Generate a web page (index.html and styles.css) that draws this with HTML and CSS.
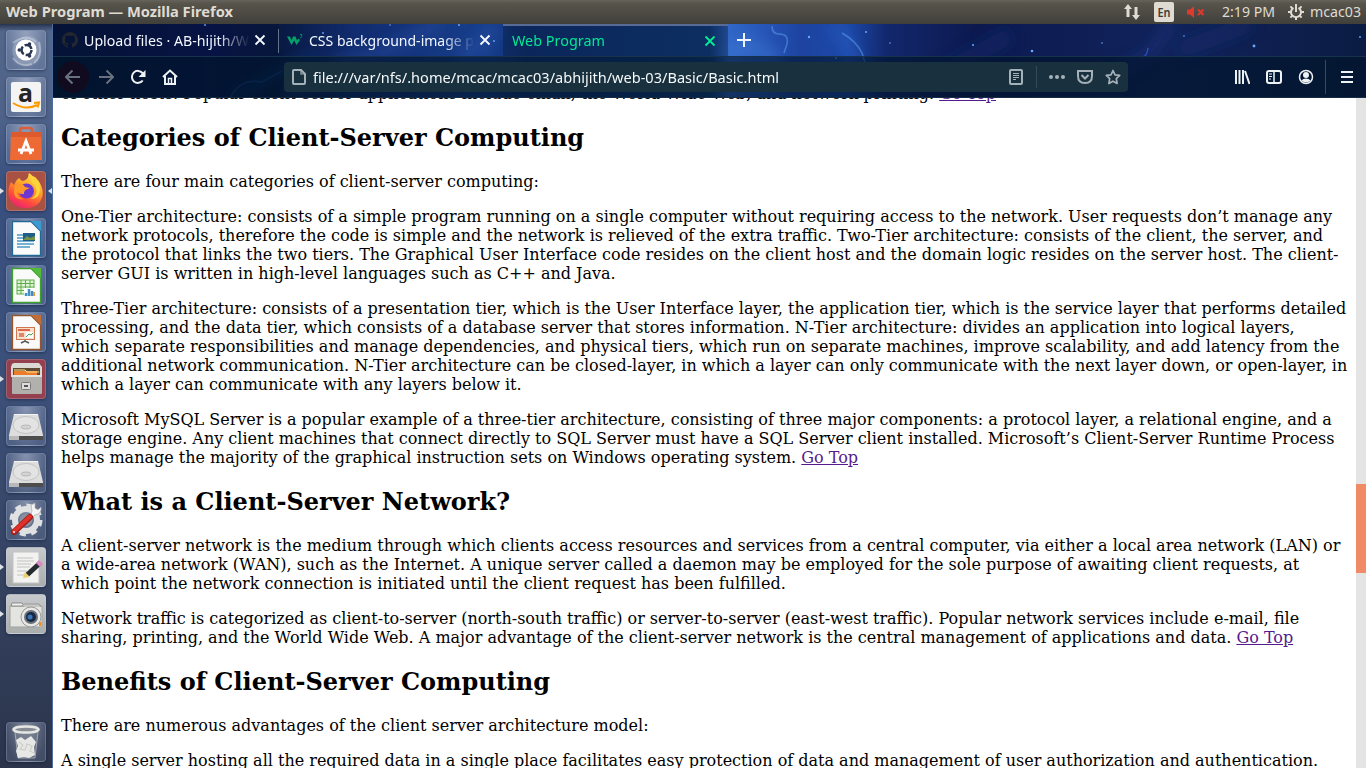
FILE: index.html
```html
<!DOCTYPE html>
<html lang="en">
<head>
<meta charset="utf-8">
<title>Web Program</title>
<link rel="stylesheet" href="styles.css">
</head>
<body>
<div class="desktop">
<header class="panel">
  <svg class="label title" width="240" height="24"><text x="0" y="17" textLength="227" lengthAdjust="spacingAndGlyphs">Web Program — Mozilla Firefox</text></svg>
  <div class="indicators">
    <svg width="18" height="18" viewBox="0 0 18 18"><path d="M5 1L9 6H6.500V14H3.500V6H1ZM13 17L9 12h2.500V4h3v8H17Z" fill="#dfdbd2"/></svg>
    <svg class="lang" width="20" height="20"><rect width="20" height="20" rx="2" fill="#dfdbd2"/><text x="3.500" y="15" textLength="13" lengthAdjust="spacingAndGlyphs">En</text></svg>
    <svg class="mute" width="18" height="14" viewBox="0 0 18 14"><path d="M0 4.500h3l4-3.500v12L3 9.500H0Z" fill="#df382c"/><path d="M11 4.500l5.500 5.500M16.500 4.500l-5.500 5.500" stroke="#df382c" stroke-width="2"/></svg>
    <svg class="label clock" width="56" height="24"><text x="0" y="17" textLength="53" lengthAdjust="spacingAndGlyphs">2:19 PM</text></svg>
    <svg class="gear" width="16" height="16" viewBox="-8 -8 16 16" fill="none" stroke="#dfdbd2"><path d="M-2.500-4.200A5 5 0 1 0 2.500-4.200" stroke-width="2"/><path d="M0-8V0" stroke-width="2"/><path d="M-8 0h3M5 0h3M0 5v3M-5.600-5.600l2 2M5.600-5.600l-2 2M-5.600 5.600l2-2M5.600 5.600l-2-2" stroke-width="2"/></svg>
    <svg class="label user" width="56" height="24"><text x="0" y="17" textLength="51" lengthAdjust="spacingAndGlyphs">mcac03</text></svg>
  </div>
</header>
<div class="workspace">
<nav class="launcher">
  <div class="tile"><svg viewBox="0 0 40 40"><path d="M7 25C4 13 15 3 28 7C36 12 36 25 31 31C28 37 15 37 10 32" fill="#b6bdd0" opacity=".38"/><path d="M7 13Q20 3 30 12M33 12Q37 26 28 33M7 28Q14 38 26 34" fill="none" stroke="#e1e5ee" stroke-width="2" opacity=".4"/><circle cx="20" cy="20" r="10.500" fill="#fff"/><circle cx="20.500" cy="20" r="5" fill="none" stroke="#2c3550" stroke-width="2.500" stroke-dasharray="8.500 2"/><circle cx="13.300" cy="20" r="1.800" fill="#2c3550"/><circle cx="23.500" cy="14" r="1.800" fill="#2c3550"/><circle cx="23.500" cy="26" r="1.800" fill="#2c3550"/></svg></div>
  <div class="tile"><svg viewBox="0 0 40 40"><rect x="5" y="5" width="30" height="30" rx="2" fill="#f4f4f4"/><text class="amazon" x="12" y="25" textLength="15" lengthAdjust="spacingAndGlyphs">a</text><path d="M7 26Q20 34 31 28M28 26l5-.500-1.500 5" fill="none" stroke="#ff9900" stroke-width="2"/></svg></div>
  <div class="tile"><svg viewBox="0 0 40 40"><path d="M14 13V6q0-2 2-2h8q2 0 2 2v7" fill="none" stroke="#d95f3a" stroke-width="2.500"/><path d="M5 8h30l1 28H4Z" fill="#ee6a35"/><path d="M5 8h30v5H5Z" fill="#dd5a2c"/><path d="M15 30l5-13 5 13M12 26h16" fill="none" stroke="#fff" stroke-width="2.800"/></svg></div>
  <div class="tile tile-firefox running focused"><svg viewBox="0 0 40 40"><defs><linearGradient id="fox" x1=".8" y1="0" x2=".3" y2="1"><stop stop-color="#fff04d"/><stop offset=".45" stop-color="#ff9a28"/><stop offset=".75" stop-color="#ff493f"/><stop offset="1" stop-color="#ee2273"/></linearGradient></defs><path d="M5 11l3 3Q10 9 13 7l3 3q6 0 7-8c5 3 5 7 8 9l1-2c11 16 1 28-12 28C3 37-1 22 5 11Z" fill="url(#fox)"/><circle cx="20.500" cy="20" r="7.500" fill="#6d38d2"/><path d="M9 14q8-3 10 2l5 1q-7 2-6 6-5 0-7-2 1 6 7 7-13 2-9-14Z" fill="#ff9829"/><path d="M22 3c4 5 2 8 7 12 4 7-1 12-5 13 14 1 11-18 5-22Z" fill="#ffd33c"/></svg></div>
  <div class="tile"><svg viewBox="0 0 40 40"><path d="M6.500 3.500H25L34.500 13v24.500h-28Z" fill="#fafafa" stroke="#226894" stroke-width="1.300"/><path d="M25 3h10v10Z" fill="#3b9bd1"/><path d="M11 17h7M11 20h7M11 23h17M11 26h17M11 29h13" stroke="#4899c6" stroke-width="1.700"/><rect x="17" y="15" width="12" height="8" fill="#205e86"/><path d="M17 22l4-4 3 2 5-2v4Z" fill="#759347"/></svg></div>
  <div class="tile"><svg viewBox="0 0 40 40"><path d="M6.500 3.500H25L34.500 13v24.500h-28Z" fill="#fafafa" stroke="#3da32b" stroke-width="1.300"/><path d="M25 3h10v10Z" fill="#52bc38"/><rect x="11" y="15" width="17" height="14" fill="#dff3d7" stroke="#5eae48"/><path d="M11 18.500h17M11 22h17M11 25.500h17M15 15v14M19.500 15v14M24 15v14" stroke="#5eae48"/><rect x="18" y="23" width="11" height="8" fill="#fff"/><path d="M20 31v-3M23 31v-7M26 31v-5" stroke="#408fc1" stroke-width="2.500"/><path d="M28 31v-4" stroke="#e9983b" stroke-width="2"/></svg></div>
  <div class="tile"><svg viewBox="0 0 40 40"><path d="M6.500 3.500H25L34.500 13v24.500h-28Z" fill="#fafafa" stroke="#95552c" stroke-width="1.300"/><path d="M25 3h10v10Z" fill="#c26c36"/><rect x="10.500" y="15.500" width="18" height="12" fill="#f9dfcc" stroke="#d07651"/><path d="M12 18h12" stroke="#d9694a" stroke-width="2"/><path d="M13 22h5M13 24h5" stroke="#d9694a" stroke-width="1.500"/><rect x="20" y="20" width="7" height="6" fill="#fff"/><path d="M20 25l3-3 2 1 2-2" stroke="#43aa4f" fill="none"/><path d="M15 31l4-2 4 2M19 28v2" fill="none" stroke="#555" stroke-width="1.500"/></svg></div>
  <div class="tile tile-files running"><svg viewBox="0 0 40 40"><path d="M6 5l2-1h25l3 4v10H5V8Z" fill="#dbd9d3"/><path d="M7 9h27v8H7Z" fill="#5f4b35"/><path d="M8 12h23v5H8Z" fill="#ed7b2c"/><path d="M8 11h11l2 2h12" stroke="#ffe48b" fill="none"/><rect x="6" y="17" width="30" height="18" rx="1" fill="#b1b0ad"/><path d="M6 17h30" stroke="#e2e2df" stroke-width="2"/><rect x="15.500" y="23.500" width="9" height="7" rx="1" fill="#ddd" stroke="#777"/><path d="M18 27h4" stroke="#555" stroke-width="2"/></svg></div>
  <div class="tile"><svg viewBox="0 0 40 40"><use href="#disk"/></svg></div>
  <div class="tile"><svg viewBox="0 0 40 40"><g id="disk"><path d="M8 8h24l5 21v5H3v-5Z" fill="#dcdddc"/><path d="M3 30h34v4H3Z" fill="#4d4d4d"/><path d="M3 30h10v4H3Z" fill="#b8b8b8"/><ellipse cx="20" cy="19" rx="13" ry="8.500" fill="#e2e3e2" stroke="#c3c4c3"/><ellipse cx="20" cy="21" rx="5" ry="2" fill="#d2d3d2" stroke="#b8b8b8"/><path d="M8 8.500h24" stroke="#f4f4f4"/></g></svg></div>
  <div class="tile"><svg viewBox="0 0 40 40"><circle cx="20" cy="20" r="11" fill="none" stroke="#e0e1e2" stroke-width="6"/><circle cx="20" cy="20" r="14.500" fill="none" stroke="#e0e1e2" stroke-width="4" stroke-dasharray="6 5.390"/><circle cx="20" cy="20" r="6.500" fill="#87909f"/><path d="M25 14l1-3-1-6 4-2v5l3 2 3-3q1 7-6 8l-3 3Z" fill="#f4f4f4" stroke="#aaa" stroke-width=".7"/><path d="M8 32L24 17" stroke="#a21c17" stroke-width="6" stroke-linecap="round"/><path d="M8 31.500L24 16.500" stroke="#df3029" stroke-width="4" stroke-linecap="round"/><circle cx="8" cy="32" r="1" fill="#eee"/></svg></div>
  <div class="tile tile-light running"><svg viewBox="0 0 40 40"><rect x="7" y="5" width="26" height="31" fill="#f2f2f1" stroke="#c3c3c3"/><path d="M11 11h16M11 14h17M11 17h14M11 20h13M11 24h10M11 28h7" stroke="#c2c2c2"/><path d="M21 28L34 16" stroke="#252a30" stroke-width="5"/><path d="M32 18l3-3" stroke="#d98bc1" stroke-width="6"/><path d="M17 31l2-6 5 5Z" fill="#e9cf72"/></svg></div>
  <div class="tile tile-light running"><svg viewBox="0 0 40 40"><path d="M4 12h32v21H4Z" fill="#e4e4e1" stroke="#a2a39f"/><path d="M5 12l1-3h10l2 3Z" fill="#f2f2f0" stroke="#888"/><path d="M16 12l2-2h15l2 3" fill="#c9c9c6" stroke="#999"/><circle cx="25" cy="23" r="10" fill="#e8e8e6" stroke="#969a9a"/><circle cx="25" cy="23" r="7" fill="#6a7177"/><circle cx="25" cy="23" r="5" fill="#172846"/><circle cx="24" cy="23" r="2.500" fill="#3c75b3"/><rect x="33" y="28" width="2.500" height="4" fill="#ef8f2c"/></svg></div>
  <div class="tile trash"><svg viewBox="0 0 40 40"><path d="M8 9h24l-3 27H12Z" fill="#8b919a" opacity=".35"/><path d="M9 10l3 26h17l3-26" fill="none" stroke="#bcc0c6" stroke-width=".7"/><path d="M10 18l5-3 4 3 6-4 5 6-2 5 1 8-6 3-5-1-6 1-2-7 2-5Z" fill="#e7e8e6"/><path d="M13 20l4 3-3 4 5 1 2-6 5 2-2 5 4 2" fill="none" stroke="#cbcdc9" stroke-width="1.200"/><ellipse cx="20" cy="7.500" rx="12.500" ry="3" fill="#858c93" stroke="#e6e7e4" stroke-width="2.500"/></svg></div>
</nav>
<main class="browser">
  <div class="chrome">
    <svg class="nebula" width="1313" height="74" viewBox="53 24 1313 74" preserveAspectRatio="none">
      <defs><linearGradient id="sky"><stop stop-color="#05153a"/><stop offset=".12" stop-color="#08154a"/><stop offset=".17" stop-color="#081940"/><stop offset=".23" stop-color="#112c70"/><stop offset=".33" stop-color="#183f8d"/><stop offset=".36" stop-color="#103173"/><stop offset=".5" stop-color="#123d7e"/><stop offset=".515" stop-color="#3167c7"/><stop offset=".55" stop-color="#2450b2"/><stop offset=".57" stop-color="#1d439f"/><stop offset=".605" stop-color="#1d4aab"/><stop offset=".635" stop-color="#12276c"/><stop offset=".7" stop-color="#0c1a50"/><stop offset=".85" stop-color="#11235b"/><stop offset="1" stop-color="#0b1c43"/></linearGradient><filter id="soft" x="-20%" y="-60%" width="140%" height="220%"><feGaussianBlur stdDeviation="7"/></filter></defs>
      <rect x="53" y="24" width="1313" height="74" fill="url(#sky)"/>
      <g filter="url(#soft)" fill="none">
        <path d="M285 96L345 62 384 52 442 22M460 60l42-35" stroke="#3156b0" stroke-width="12" opacity=".38"/>
        <path d="M235 98l40-25 40-15" stroke="#164791" stroke-width="6" opacity=".6"/>
        <path d="M728 55l20-10 30 15" stroke="#488ae1" stroke-width="14" opacity=".35"/>
        <path d="M830 28q25 14 26 40" stroke="#2b61cc" stroke-width="10" opacity=".45"/>
        <path d="M1120 70l28-15 24-31" stroke="#243c94" stroke-width="9" opacity=".4"/>
        <path d="M1180 50L1250 24M930 80L1010 35" stroke="#1b3277" stroke-width="16" opacity=".4"/>
      </g>
      <path d="M772 26q0 8 7 8 10 0 8 10l-3 9M842 33q14 8 20 20l5 16" fill="none" stroke="#60a9f4" stroke-width="1.500" opacity=".5"/>
      <path d="M230 98q10-20 32-16l20-11" fill="none" stroke="#1e4c94" stroke-width="1.500" opacity=".6"/>
      <path d="M1142 57q5 0 6-9" fill="none" stroke="#2b58d8" stroke-width="1.500" opacity=".8"/>
      <g fill="#68a7ff"><circle cx="205" cy="25" r="1"/><circle cx="459" cy="25" r="1"/><circle cx="323" cy="33" r=".9"/><circle cx="390" cy="25" r=".8"/><circle cx="809" cy="37" r="1.200"/><circle cx="866" cy="32" r="1"/><circle cx="890" cy="43" r=".8"/><circle cx="973" cy="45" r="1"/><circle cx="1032" cy="51" r="1.300"/><circle cx="1102" cy="43" r=".8"/><circle cx="1184" cy="36" r=".8"/><circle cx="1254" cy="46" r="1.400"/><circle cx="1360" cy="37" r=".9"/><circle cx="836" cy="58" r="1"/><circle cx="494" cy="41" r=".9"/></g>
    </svg>
    <div class="tabs">
      <div class="tab">
        <svg class="favicon" width="16" height="16" viewBox="0 0 16 16"><path fill="#23272f" d="M8 0C3.580 0 0 3.580 0 8c0 3.540 2.290 6.530 5.470 7.590.4.070.55-.17.55-.38v-1.490c-2.010.37-2.530-.49-2.690-.94-.09-.23-.48-.94-.82-1.130-.28-.15-.68-.52-.01-.53.63-.01 1.080.58 1.230.82.72 1.210 1.870.87 2.330.66.070-.52.28-.87.510-1.070-1.780-.2-3.640-.89-3.640-3.950 0-.87.310-1.590.82-2.150-.08-.2-.36-1.020.08-2.120 0 0 .67-.21 2.200.82A7.600 7.600 0 0 1 8 3.860c.68 0 1.360.09 2 .27 1.530-1.040 2.200-.82 2.200-.82.44 1.100.16 1.920.08 2.120.51.56.82 1.270.82 2.150 0 3.070-1.870 3.750-3.650 3.950.29.25.54.73.54 1.480v2.200c0 .21.15.46.55.38A8 8 0 0 0 8 0Z"/></svg>
        <svg class="label tab-label" width="166" height="32"><text x="0" y="22" textLength="165" lengthAdjust="spacingAndGlyphs">Upload files · AB-hijith/W</text></svg>
        <svg class="close" width="12" height="12"><path d="M1.500 1.500l9 9M10.500 1.500l-9 9"/></svg>
      </div>
      <div class="tab divided">
        <svg class="favicon" width="16" height="16" viewBox="0 0 16 16"><path d="M0 4.500h3l1.500 4L6 4.500h2.500L10 8.500l1.500-2 1.500 1.500-3.500 5-2.300-4.500L4.500 13Z" fill="#04a06a"/><path d="M13 2.500h2l-1 1.200q2 .6 0 2h-1" fill="none" stroke="#04a06a" stroke-width=".8"/></svg>
        <svg class="label tab-label" width="166" height="32"><text x="0" y="22" textLength="165" lengthAdjust="spacingAndGlyphs">CSS background-image p</text></svg>
        <svg class="close" width="12" height="12"><path d="M1.500 1.500l9 9M10.500 1.500l-9 9"/></svg>
      </div>
      <div class="tab active">
        <svg class="label" width="166" height="32"><text x="0" y="22" textLength="93" lengthAdjust="spacingAndGlyphs">Web Program</text></svg>
        <svg class="close" width="12" height="12"><path d="M1.500 1.500l9 9M10.500 1.500l-9 9"/></svg>
      </div>
      <svg class="new-tab" width="14" height="14"><path d="M7 0v14M0 7h14" stroke="#eef5ff" stroke-width="2"/></svg>
    </div>
    <div class="navbar">
      <div class="nav-buttons">
        <div class="button back"><svg viewBox="0 0 16 16"><path d="M15 8H1M7.500 1.500L1 8l6.500 6.500"/></svg></div>
        <div class="button forward"><svg viewBox="0 0 16 16"><path d="M1 8h14M8.500 1.500L15 8l-6.500 6.500"/></svg></div>
        <div class="button"><svg viewBox="0 0 16 16"><path d="M12.700 11.500A6 6 0 1 1 12.500 4L14 6"/><path d="M15.500 1v7h-7Z" fill="#edf3f5" stroke="none"/></svg></div>
        <div class="button"><svg viewBox="0 0 16 16"><path d="M1 8l7-6.500L15 8M3 7v8h10V7"/><path d="M6.500 14v-4.500h3V14" stroke-width="1.500"/></svg></div>
      </div>
      <div class="urlbar">
        <svg class="page-icon" width="14" height="16" viewBox="0 0 14 16"><path d="M2 1h7l4 4v9q0 1-1 1H2q-1 0-1-1V2q0-1 1-1Z"/><path d="M9 1v4h4" stroke-width="1.200"/></svg>
        <svg class="label url" width="480" height="30"><text x="0" y="21" textLength="466" lengthAdjust="spacingAndGlyphs">file:///var/nfs/.home/mcac/mcac03/abhijith/web-03/Basic/Basic.html</text></svg>
        <div class="page-actions">
          <svg width="14" height="16" viewBox="0 0 14 16"><rect x="1" y="1" width="12" height="14" rx="1"/><path d="M4 4.500h6M4 6.500h6M4 8.500h6M4 10.500h3" stroke-width="1"/></svg>
          <span class="separator"></span>
          <svg width="16" height="16" viewBox="0 0 16 16"><g fill="#a5b1b8" stroke="none"><circle cx="2" cy="8" r="2"/><circle cx="8" cy="8" r="2"/><circle cx="14" cy="8" r="2"/></g></svg>
          <svg width="16" height="16" viewBox="0 0 16 16"><path d="M1 2h14v5q0 7-7 7T1 7ZM4.500 6L8 9.500 11.500 6"/></svg>
          <svg width="16" height="16" viewBox="0 0 16 16"><path d="M8 1.500l2 4.300 4.700.6-3.400 3.300.8 4.800L8 12.200l-4.100 2.300.8-4.800L1.300 6.400 6 5.800Z" stroke-linejoin="round" stroke-width="1.700"/></svg>
        </div>
      </div>
      <div class="toolbar">
        <svg viewBox="0 0 16 16"><path d="M2 1v14M5.500 1v14M9 1v14M11 2L15.500 15"/></svg>
        <svg viewBox="0 0 16 16"><rect x="1" y="2" width="14" height="12" rx="2"/><path d="M8 2v12" stroke-width="1.500"/><path d="M3 5h3M3 7.500h3M3 10h2" stroke-width="1"/></svg>
        <svg viewBox="0 0 16 16"><circle cx="8" cy="8" r="6.500" stroke-width="1.500"/><circle cx="8" cy="6" r="3" fill="#edf3f5" stroke="none"/><path d="M3.500 11.500q1.500-2 4.500-2t4.500 2q-4.500 4-9 0" fill="#edf3f5" stroke="none"/></svg>
        <span class="separator"></span>
        <svg class="menu" viewBox="0 0 16 16"><path d="M2 3h12M2 8h12M2 13h12"/></svg>
      </div>
    </div>
  </div>
  <div class="viewport">
    <article class="document">
      <p>of other hosts. Popular client-server applications include email, the World Wide Web, and network printing. <a href="#top">Go Top</a></p>
      <h2>Categories of Client-Server Computing</h2>
      <p>There are four main categories of client-server computing:</p>
      <p>One-Tier architecture: consists of a simple program running on a single computer without requiring access to the network. User requests don’t manage any<br>network protocols, therefore the code is simple and the network is relieved of the extra traffic. Two-Tier architecture: consists of the client, the server, and<br>the protocol that links the two tiers. The Graphical User Interface code resides on the client host and the domain logic resides on the server host. The client-<br>server GUI is written in high-level languages such as C++ and Java.</p>
      <p>Three-Tier architecture: consists of a presentation tier, which is the User Interface layer, the application tier, which is the service layer that performs detailed<br>processing, and the data tier, which consists of a database server that stores information. N-Tier architecture: divides an application into logical layers,<br>which separate responsibilities and manage dependencies, and physical tiers, which run on separate machines, improve scalability, and add latency from the<br>additional network communication. N-Tier architecture can be closed-layer, in which a layer can only communicate with the next layer down, or open-layer, in<br>which a layer can communicate with any layers below it.</p>
      <p>Microsoft MySQL Server is a popular example of a three-tier architecture, consisting of three major components: a protocol layer, a relational engine, and a<br>storage engine. Any client machines that connect directly to SQL Server must have a SQL Server client installed. Microsoft’s Client-Server Runtime Process<br>helps manage the majority of the graphical instruction sets on Windows operating system. <a href="#top">Go Top</a></p>
      <h2>What is a Client-Server Network?</h2>
      <p>A client-server network is the medium through which clients access resources and services from a central computer, via either a local area network (LAN) or<br>a wide-area network (WAN), such as the Internet. A unique server called a daemon may be employed for the sole purpose of awaiting client requests, at<br>which point the network connection is initiated until the client request has been fulfilled.</p>
      <p>Network traffic is categorized as client-to-server (north-south traffic) or server-to-server (east-west traffic). Popular network services include e-mail, file<br>sharing, printing, and the World Wide Web. A major advantage of the client-server network is the central management of applications and data. <a href="#top">Go Top</a></p>
      <h2>Benefits of Client-Server Computing</h2>
      <p>There are numerous advantages of the client server architecture model:</p>
      <p>A single server hosting all the required data in a single place facilitates easy protection of data and management of user authorization and authentication.</p>
    </article>
    <div class="scrollbar"><div class="thumb"></div></div>
  </div>
</main>
</div>
</div>
</body>
</html>
```
FILE: styles.css
```css
* { box-sizing: border-box; }
body { margin: 0; }
svg { display: block; flex: none; }
.desktop { width: 1366px; height: 768px; overflow: hidden; display: flex; flex-direction: column; font-family: "Noto Sans", sans-serif; }
.panel { height: 24px; flex: none; display: flex; justify-content: space-between; padding: 0 0 0 6px; background: linear-gradient(#65635b, #57544b 15%, #403f3a); }
.label { font-size: 15px; fill: #dfdbd2; }
.title { font-size: 14.5px; font-weight: 700; }
.indicators { display: flex; align-items: center; }
.lang { margin-left: 13px; font-size: 13px; font-weight: 600; fill: #3c3b37; }
.mute { margin-left: 13px; }
.clock { margin-left: 17px; }
.gear { margin: 0 6px 0 10px; }
.workspace { flex: 1; min-height: 0; display: flex; }
.launcher { width: 53px; flex: none; display: flex; flex-direction: column; gap: 7px; padding: 6px 0 6px 6px; background: linear-gradient(#26334f, #53678b 7px, #4f6389 12%, #385080 22%, #3c5078 50%, #344260 75%, #2b344b); border-right: 1px solid #506d9f; }
.tile { width: 40px; height: 40px; flex: none; position: relative; border-radius: 4px; border: 1px solid rgba(205,220,245,.22); background: radial-gradient(ellipse at 50% 0, rgba(235,240,255,.43), rgba(185,200,230,.17) 80%); box-shadow: 0 1px 3px rgba(10,20,45,.45); }
.tile svg { width: 40px; height: 40px; margin: -1px; }
.tile-firefox { background: #a95243; }
.tile-files { background: #95404e; }
.tile-light { background: linear-gradient(#c7c9cc, #aaaead); }
.trash { margin-top: auto; }
.amazon { font: 700 25px "Open Sans", sans-serif; fill: #252525; }
.running::before, .focused::after { content: ""; position: absolute; top: 16px; border: 3px solid transparent; }
.running::before { left: -7px; border-left: 4px solid #dfe2e5; border-right: 0; }
.focused::after { right: -7px; border-right: 4px solid #dfe2e5; border-left: 0; }
.browser { width: 1313px; display: flex; flex-direction: column; }
.chrome { height: 74px; flex: none; position: relative; isolation: isolate; }
.nebula { position: absolute; inset: 0; z-index: -1; }
.tabs { height: 33px; display: flex; border-bottom: 1px solid #17334b; }
.tab { width: 225px; flex: none; display: flex; align-items: center; padding-left: 9px; background: rgba(0,8,25,.12); }
.favicon { margin-right: 6px; }
.tab .label { fill: #f4f8ff; }
.tab-label { mask-image: linear-gradient(90deg, #000 80%, transparent); }
.close { margin-left: 4px; fill: none; stroke: #f5faff; stroke-width: 1.8; }
.divided { background: linear-gradient(#63718b, #63718b) 0 5px / 1px 24px no-repeat; }
.active { border-top: 2px solid #576b94; background: rgba(3,19,46,.35); }
.active .label { fill: #00e894; margin-top: -2px; }
.active .close { stroke: #00ef95; margin: -1px 0 0 26px; }
.new-tab { margin: 9px 0 0 9px; }
.navbar { height: 41px; display: flex; align-items: center; background: rgba(0,20,39,.62); border-bottom: 1px solid #172c45; }
.nav-buttons { display: flex; padding-left: 4px; }
.button { width: 32px; height: 32px; padding: 8px; border-radius: 50%; }
.button svg, .toolbar svg { width: 16px; height: 16px; fill: none; stroke: #edf3f5; stroke-width: 2; }
.back { background: rgba(24,7,23,.65); margin-right: 1px; }
.back svg, .forward svg { stroke: #69717e; }
.urlbar { width: 844px; height: 30px; margin-left: 98px; padding-left: 8px; display: flex; align-items: center; border-radius: 4px; background: #19303e; }
.page-icon { margin-right: 7px; }
.page-icon, .page-actions svg { fill: none; stroke: #a5b1b8; stroke-width: 2; }
.url { fill: #f5f9fa; }
.page-actions { margin-left: auto; padding-right: 7px; display: flex; align-items: center; gap: 12px; }
.page-actions svg:first-child { margin-right: 1px; }
.separator { width: 1px; height: 22px; background: #344b5b; }
.toolbar { margin-left: auto; padding-right: 11px; display: flex; align-items: center; gap: 16px; }
.toolbar .separator { height: 34px; margin: 0 -3px 0 -5px; }
.viewport { flex: 1; min-height: 0; display: flex; background: #fff; overflow: hidden; }
.document { flex: 1; padding: 0 8px; font: 16px/19px "DejaVu Serif", serif; color: #000; white-space: nowrap; }
.document p { margin: 0 0 16px; }
.document p:first-child { margin: -14px 0 0; }
.document h2 { font-size: 24px; line-height: 29px; margin: 20px 0; }
.document a { color: #551a8b; }
.scrollbar { width: 10px; height: 670px; background: #e4e4e4; padding-top: 386px; }
.thumb { height: 89px; background: #ef8b66; }
```
